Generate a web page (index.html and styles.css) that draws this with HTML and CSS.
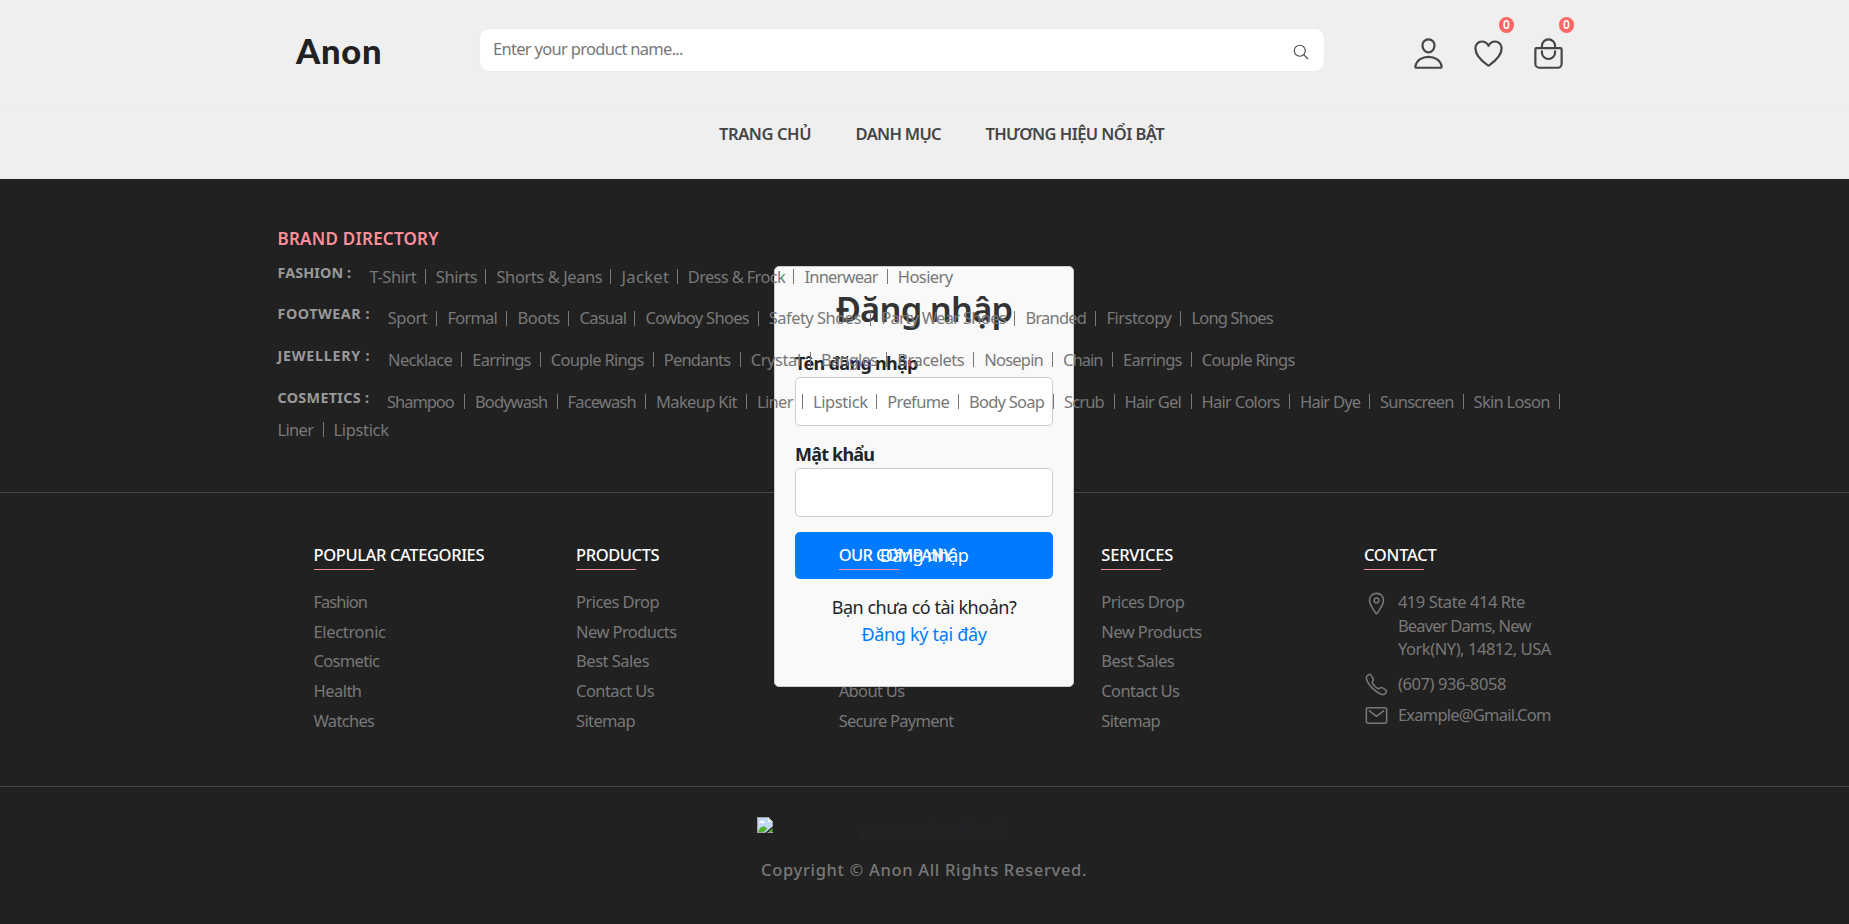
FILE: index.html
```html
<!DOCTYPE html>
<html lang="vi">
<head>
<meta charset="utf-8">
<title>Anon</title>
<link rel="stylesheet" href="styles.css">
</head>
<body>
<header class="header">
  <div class="header-main">
    <a class="logo" data-w="84">Anon</a>
    <div class="search">
      <span class="placeholder" data-w="189">Enter your product name...</span>
      <svg class="search-icon" viewBox="0 0 512 512"><path d="M221.09 64a157.09 157.09 0 10157.09 157.09A157.1 157.1 0 00221.09 64z"/><path d="M338.29 338.29L448 448"/></svg>
    </div>
    <div class="actions">
      <div class="action"><svg viewBox="0 0 512 512"><path d="M344 144c-3.92 52.87-44 96-88 96s-84.15-43.12-88-96c-4-55 35-96 88-96s92 42 88 96z"/><path d="M256 304c-87 0-175.3 48-191.64 138.6C62.39 453.52 68.57 464 80 464h352c11.44 0 17.62-10.48 15.65-21.4C431.3 352 343 304 256 304z"/></svg></div>
      <div class="action"><svg viewBox="0 0 512 512"><path d="M352.92 80C288 80 256 144 256 144s-32-64-96.92-64c-52.76 0-94.54 44.14-95.08 96.81-1.1 109.33 86.73 187.08 183 252.42a16 16 0 0018 0c96.26-65.34 184.09-143.09 183-252.42-.54-52.67-42.32-96.81-95.08-96.81z"/></svg><span class="badge">0</span></div>
      <div class="action"><svg viewBox="0 0 512 512"><path d="M80 176a16 16 0 00-16 16v216c0 30.24 25.76 56 56 56h272c30.24 0 56-24.51 56-54.75V192a16 16 0 00-16-16zM160 176v-32a96 96 0 0196-96h0a96 96 0 0196 96v32M160 224v16a96 96 0 0096 96h0a96 96 0 0096-96v-16"/></svg><span class="badge">0</span></div>
    </div>
  </div>
  <nav class="menu">
    <a data-w="91">TRANG CHỦ</a><a data-w="84.5">DANH MỤC</a><a data-w="177.7">THƯƠNG HIỆU NỔI BẬT</a>
  </nav>
</header>

<section class="login">
  <h2><span data-w="176">Đăng nhập</span></h2>
  <label><span data-w="122">Tên đăng nhập</span></label>
  <div class="field"></div>
  <label><span data-w="78.5">Mật khẩu</span></label>
  <div class="field"></div>
  <div class="submit"><span data-w="87.5">Đăng nhập</span></div>
  <p><span data-w="183.5">Bạn chưa có tài khoản?</span></p>
  <p><a data-w="124">Đăng ký tại đây</a></p>
</section>

<footer class="footer">
  <section class="directory">
    <h2><span data-w="159.5">BRAND DIRECTORY</span></h2>
    <div class="row">
      <h3 style="width:92px"><span data-w="72">FASHION :</span></h3>
      <a style="width:66.3px"><span data-w="45.7">T-Shirt</span></a><a style="width:60.7px"><span data-w="40.4">Shirts</span></a><a style="width:125px"><span data-w="104.7">Shorts &amp; Jeans</span></a><a style="width:66.3px"><span data-w="46">Jacket</span></a><a style="width:116.7px"><span data-w="96.5">Dress &amp; Frock</span></a><a style="width:93.3px"><span data-w="72.5">Innerwear</span></a><a><span data-w="54">Hosiery</span></a>
    </div>
    <div class="row">
      <h3 style="width:110.3px"><span data-w="90.5">FOOTWEAR :</span></h3>
      <a style="width:59.7px"><span data-w="38.5">Sport</span></a><a style="width:70px"><span data-w="48.7">Formal</span></a><a style="width:62px"><span data-w="41.3">Boots</span></a><a style="width:66px"><span data-w="46">Casual</span></a><a style="width:123.3px"><span data-w="102.7">Cowboy Shoes</span></a><a style="width:112.4px"><span data-w="91">Safety Shoes</span></a><a style="width:144.3px"><span data-w="124">Party Wear Shoes</span></a><a style="width:81px"><span data-w="60">Branded</span></a><a style="width:85px"><span data-w="64">Firstcopy</span></a><a><span data-w="80.7">Long Shoes</span></a>
    </div>
    <div class="row">
      <h3 style="width:110.5px"><span data-w="90.5">JEWELLERY :</span></h3>
      <a style="width:84.3px"><span data-w="63.3">Necklace</span></a><a style="width:78.4px"><span data-w="57.7">Earrings</span></a><a style="width:113px"><span data-w="92.3">Couple Rings</span></a><a style="width:87px"><span data-w="66">Pendants</span></a><a style="width:70.3px"><span data-w="49">Crystal</span></a><a style="width:76.3px"><span data-w="55.5">Bangles</span></a><a style="width:87px"><span data-w="66">Bracelets</span></a><a style="width:78.7px"><span data-w="58">Nosepin</span></a><a style="width:60px"><span data-w="39">Chain</span></a><a style="width:78.7px"><span data-w="58">Earrings</span></a><a><span data-w="92.3">Couple Rings</span></a>
    </div>
    <div class="row">
      <h3 style="width:109.5px"><span data-w="90">COSMETICS :</span></h3>
      <a style="width:88px"><span data-w="66.3">Shampoo</span></a><a style="width:92.6px"><span data-w="71.7">Bodywash</span></a><a style="width:88.4px"><span data-w="67.5">Facewash</span></a><a style="width:101px"><span data-w="80">Makeup Kit</span></a><a style="width:56px"><span data-w="35">Liner</span></a><a style="width:74.3px"><span data-w="53.5">Lipstick</span></a><a style="width:81.7px"><span data-w="61">Prefume</span></a><a style="width:95px"><span data-w="74.5">Body Soap</span></a><a style="width:60.6px"><span data-w="39.3">Scrub</span></a><a style="width:77px"><span data-w="55.7">Hair Gel</span></a><a style="width:98.4px"><span data-w="77.3">Hair Colors</span></a><a style="width:80px"><span data-w="59.7">Hair Dye</span></a><a style="width:93.6px"><span data-w="73">Sunscreen</span></a><a style="width:96.3px"><span data-w="75.3">Skin Loson</span></a><a style="width:56px"><span data-w="35">Liner</span></a><a><span data-w="54">Lipstick</span></a>
    </div>
  </section>

  <section class="links">
    <div class="col">
      <h4><span data-w="169.5">POPULAR CATEGORIES</span></h4>
      <a data-w="53">Fashion</a><a data-w="71">Electronic</a><a data-w="65">Cosmetic</a><a data-w="47">Health</a><a data-w="60">Watches</a>
    </div>
    <div class="col">
      <h4><span data-w="82">PRODUCTS</span></h4>
      <a data-w="82">Prices Drop</a><a data-w="99.5">New Products</a><a data-w="72">Best Sales</a><a data-w="77">Contact Us</a><a data-w="58">Sitemap</a>
    </div>
    <div class="col">
      <h4><span data-w="113">OUR COMPANY</span></h4>
      <a>Delivery</a><a>Legal Notice</a><a>Terms And Conditions</a><a data-w="65">About Us</a><a data-w="114">Secure Payment</a>
    </div>
    <div class="col">
      <h4><span data-w="70.5">SERVICES</span></h4>
      <a data-w="82">Prices Drop</a><a data-w="99.5">New Products</a><a data-w="72">Best Sales</a><a data-w="77">Contact Us</a><a data-w="58">Sitemap</a>
    </div>
    <div class="col">
      <h4><span data-w="71.5">CONTACT</span></h4>
      <div class="contact address"><svg viewBox="0 0 512 512"><path d="M256 48c-79.5 0-144 61.39-144 137 0 87 96 224.87 131.25 272.49a15.77 15.77 0 0025.5 0C304 409.89 400 272.07 400 185c0-75.61-64.5-137-144-137z"/><circle cx="256" cy="192" r="48"/></svg><div><span data-w="126">419 State 414 Rte</span><br><span data-w="132">Beaver Dams, New</span><br><span data-w="152">York(NY), 14812, USA</span></div></div>
      <div class="contact"><svg viewBox="0 0 512 512"><path d="M451 374c-15.88-16-54.34-39.35-73-48.76-24.3-12.24-26.3-13.24-45.4.95-12.74 9.47-21.21 17.93-36.12 14.75s-47.31-21.11-75.68-49.39-47.34-61.62-50.53-76.48 5.41-23.23 14.79-36c13.22-18 12.22-21 .92-45.3-8.81-18.9-32.84-57-48.9-72.8C119.9 44 119.9 47 108.83 51.6A160.15 160.15 0 0083 65.37C67 76 58.12 84.83 51.91 98.1s-9 44.38 23.07 102.64 54.57 88.05 101.14 134.49S258.5 406.64 310.85 436c64.76 36.27 89.6 29.2 102.91 23s22.18-15 32.83-31a159.09 159.09 0 0013.8-25.8C465 391.17 468 391.17 451 374z"/></svg><span data-w="107">(607) 936-8058</span></div>
      <div class="contact"><svg viewBox="0 0 512 512"><rect x="48" y="96" width="416" height="320" rx="40"/><path d="M112 160l144 112 144-112"/></svg><span data-w="152">Example@Gmail.Com</span></div>
    </div>
  </section>

  <section class="bottom">
    <div class="payment">
      <svg class="broken" viewBox="0 0 16 16"><path d="M0 0h11l5 5v4L8 16H0z" fill="#c4d8f8"/><path d="M1 15c2-6 7-7 9-3l-3 3z" fill="#56b02f"/><path d="M2 6c0-1 1-1 2-2 1-1 3 0 3 1h1v1z" fill="#fff"/><path d="M11 0l5 5h-5z" fill="#fff"/><path d="M15.500 11v4.500H11z" fill="#56b02f"/><path d="M.5 16V.5H11l4.500 4.500v4M0 15.500h7M11 15.500h5" fill="none" stroke="#a3a3a3"/></svg>
      <span class="alt" data-w="140">payment method</span>
    </div>
    <p><span data-w="324">Copyright © Anon All Rights Reserved.</span></p>
  </section>
</footer>
<script src="fit.js"></script>
</body>
</html>
```

FILE: styles.css
```css
* { box-sizing: border-box; margin: 0; padding: 0; }
body {
  position: relative;
  height: 924px;
  overflow: hidden;
  background: #212121;
  color: #212529;
  font-family: "Noto Sans", sans-serif;
  font-size: 16.5px;
}
a, span { white-space: nowrap; }
svg { fill: none; stroke: currentColor; stroke-width: 32; stroke-linecap: round; stroke-linejoin: round; flex: none; }

.header { height: 179px; background: #efefef; color: #454545; }
.header-main {
  display: flex;
  align-items: center;
  height: 108px;
  padding: 0 283px 7px 296px;
  border-bottom: 1px solid #ebebeb;
}
.logo { flex: none; width: 183px; padding-top: 1px; color: #212121; font: 900 34.500px/46px Lato, sans-serif; }
.search {
  display: flex;
  flex: none;
  justify-content: space-between;
  width: 846px;
  height: 44px;
  padding: 0 14px 0 13px;
  background: #fff;
  border: 1px solid #ececec;
  border-radius: 10px;
}
.placeholder { color: #777; line-height: 40px; }
.search-icon { width: 18px; height: 18px; margin-top: 14px; }
.actions { display: flex; gap: 25px; margin-left: 86px; padding-top: 7px; }
.action { position: relative; width: 35px; height: 35px; }
.action svg { display: block; width: 35px; height: 35px; }
.badge {
  position: absolute;
  top: -19px;
  right: -8px;
  width: 15px;
  height: 16px;
  border-radius: 8px;
  background: #f66;
  color: #fff;
  font-size: 12px;
  font-weight: 600;
  line-height: 16px;
  text-align: center;
}
.menu { display: flex; gap: 44.500px; padding: 13px 0 0 719px; font-weight: 600; line-height: 26px; }

.login {
  position: absolute;
  z-index: 1;
  top: 266px;
  left: 774px;
  width: 300px;
  height: 421px;
  padding: 20px;
  border: 1px solid #ccc;
  border-radius: 5px;
  background: #f9f9f9;
  font-size: 18px;
  line-height: 27px;
}
.login h2 { height: 63px; color: #333; font-size: 34.500px; font-weight: 600; line-height: 44px; text-align: center; }
.login label { display: block; font-weight: 700; }
.field { height: 49px; margin-bottom: 15px; border: 1px solid #ccc; border-radius: 5px; background: #fff; }
.submit { height: 47px; margin-bottom: 15px; border-radius: 5px; background: #007bff; color: #fff; line-height: 46px; text-align: center; }
.login p { text-align: center; }
.login p a { color: #007bff; }

.footer { color: #787878; }
.directory { height: 314px; padding: 47px 270px 0 277.500px; border-bottom: 1px solid #454545; }
.directory h2 { height: 36.500px; color: #ff8f9c; font-size: 17px; font-weight: 600; line-height: 26px; }
.row { position: relative; z-index: 2; display: flex; flex-wrap: wrap; margin-bottom: 13.700px; line-height: 28px; }
.row h3 { height: 28px; color: #999; font-size: 14.300px; font-weight: 700; line-height: 20px; }
.row a { display: flex; align-items: center; justify-content: space-between; padding-right: 10px; height: 28px; }
.row a:not(:last-child)::after { content: ""; width: 1px; height: 15px; background: #787878; }

.links { display: flex; height: 294px; padding: 49px 0 0 313.500px; border-bottom: 1px solid #454545; }
.col { display: flex; flex-direction: column; align-items: flex-start; width: 262.600px; line-height: 29.700px; }
.col h4 { position: relative; z-index: 2; height: 45px; color: #fff; font-size: 16.500px; font-weight: 500; line-height: 26px; }
.col h4::after { content: ""; position: absolute; left: 0; top: 27px; width: 60px; height: 1px; background: #ff8f9c; }
.contact { display: flex; gap: 9px; height: 31px; line-height: 27px; }
.contact svg { width: 25px; height: 25px; margin: 2px 0 0; }
.address { height: 83px; padding-top: 3px; line-height: 23.600px; }
.address svg { margin-top: 1px; }

.bottom { padding-top: 30px; }
.payment { display: flex; width: 335px; height: 42px; margin-left: 757px; }
.broken { width: 16px; height: 16px; stroke: none; stroke-width: 1; stroke-linejoin: miter; }
.alt { margin-left: 88px; color: #212529; font-size: 18px; line-height: 25px; }
.bottom p { margin-top: -2px; padding-left: 761px; font-weight: 500; line-height: 26px; }
```

FILE: fit.js
```js
// Track each label so that its text spans the width given in data-w.
document.querySelectorAll('[data-w]').forEach(function (el) {
  var range = document.createRange();
  range.selectNodeContents(el);
  var natural = range.getBoundingClientRect().width;
  var n = el.textContent.length;
  var spacing = (parseFloat(el.dataset.w) + 1.5 - natural) / (n - 1);
  el.style.letterSpacing = spacing.toFixed(3) + 'px';
});
```
